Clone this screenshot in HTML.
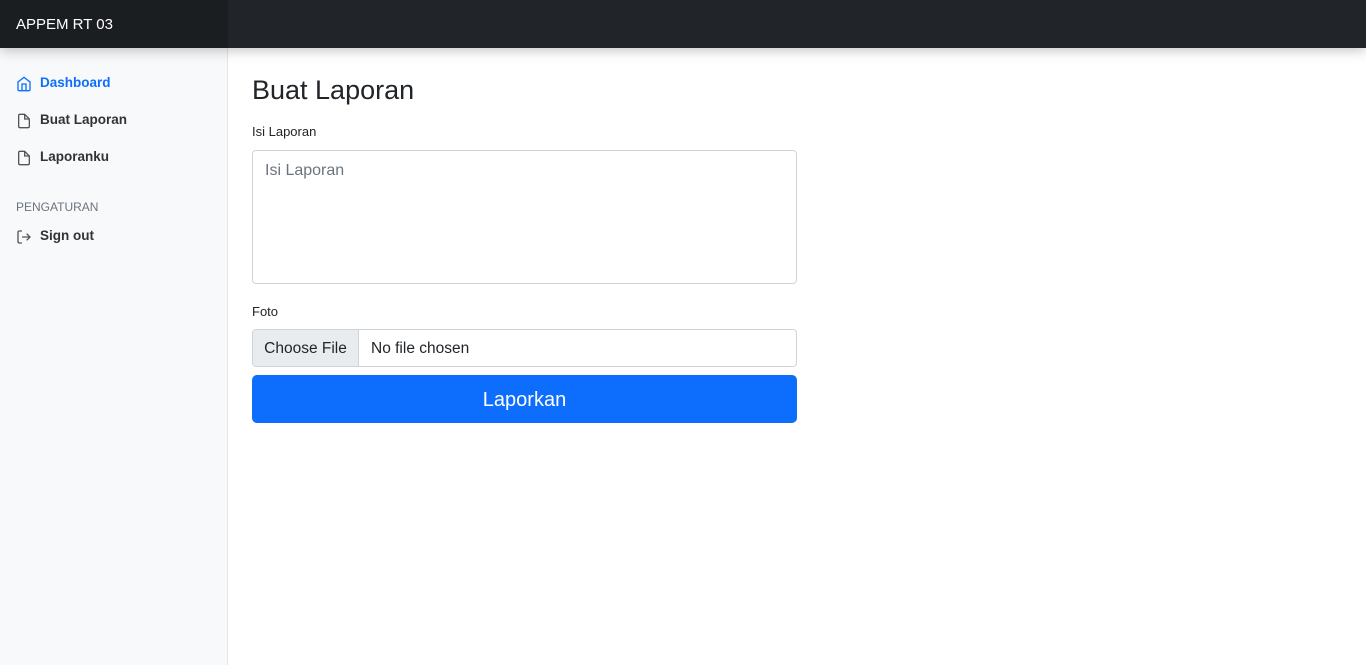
<!DOCTYPE html>
<html><head><style>
*{box-sizing:border-box;margin:0;padding:0}
body{width:1366px;height:665px;overflow:hidden;font-family:"Liberation Sans",sans-serif;color:#212529;background:#fff;position:relative}
.top{position:absolute;top:0;left:0;width:1366px;height:48px;background:#212529;box-shadow:0 2px 12px rgba(0,0,0,.25);z-index:2}
.brand{position:absolute;left:0;top:0;width:228px;height:48px;background:#1b1e21;color:#fff;font-size:15px;line-height:50px;padding-left:16px}
.side{position:absolute;top:48px;left:0;width:228px;height:617px;background:#f8f9fa;border-right:1px solid #e3e5e8}
.nav{position:absolute;left:16px;font-size:13.5px;font-weight:bold;color:#333}
.nav svg{position:absolute;left:0;top:1px}
.nav span{position:absolute;left:24px;white-space:nowrap}
.head{position:absolute;left:16px;font-size:12px;color:#6c757d}
h1{position:absolute;left:252px;top:75px;font-size:27px;font-weight:normal}
.lbl{position:absolute;left:252px;font-size:13px}
.ta{position:absolute;left:252px;top:150px;width:545px;height:134px;border:1px solid #ced4da;border-radius:4px;padding:11px 12px;color:#6c757d;font-size:16px}
.file{position:absolute;left:252px;top:329px;width:545px;height:38px;border:1px solid #ced4da;border-radius:4px;font-size:16px;overflow:hidden}
.file .b{position:absolute;left:0;top:0;width:106px;height:36px;background:#e9ecef;border-right:1px solid #ced4da;line-height:38px;text-align:center;font-size:15.5px}
.file .t{position:absolute;left:118px;line-height:38px;font-size:15.5px}
.btn{position:absolute;left:252px;top:375px;width:545px;height:48px;background:#0d6efd;border-radius:5px;color:#fff;font-size:20px;text-align:center;line-height:50px}
</style></head><body>
<div class="top"><div class="brand">APPEM RT 03</div></div>
<div class="side">
<div class="nav" style="top:27px;color:#0d6efd"><svg width="16" height="16" viewBox="0 0 24 24" fill="none" stroke="#0d6efd" stroke-width="2"><path d="M3 9l9-7 9 7v11a2 2 0 0 1-2 2H5a2 2 0 0 1-2-2z"/><path d="M9 22V12h6v10"/></svg><span>Dashboard</span></div>
<div class="nav" style="top:64px"><svg width="16" height="16" viewBox="0 0 24 24" fill="none" stroke="#555" stroke-width="2"><path d="M13 2H6a2 2 0 0 0-2 2v16a2 2 0 0 0 2 2h12a2 2 0 0 0 2-2V9z"/><path d="M13 2v7h7"/></svg><span>Buat Laporan</span></div>
<div class="nav" style="top:101px"><svg width="16" height="16" viewBox="0 0 24 24" fill="none" stroke="#555" stroke-width="2"><path d="M13 2H6a2 2 0 0 0-2 2v16a2 2 0 0 0 2 2h12a2 2 0 0 0 2-2V9z"/><path d="M13 2v7h7"/></svg><span>Laporanku</span></div>
<div class="head" style="top:152px">PENGATURAN</div>
<div class="nav" style="top:180px"><svg width="16" height="16" viewBox="0 0 24 24" fill="none" stroke="#555" stroke-width="2"><path d="M9 21H5a2 2 0 0 1-2-2V5a2 2 0 0 1 2-2h4"/><path d="M16 17l5-5-5-5M21 12H9"/></svg><span>Sign out</span></div>
</div>
<h1>Buat Laporan</h1>
<div class="lbl" style="top:124px">Isi Laporan</div>
<div class="ta">Isi Laporan</div>
<div class="lbl" style="top:304px">Foto</div>
<div class="file"><div class="b">Choose File</div><div class="t">No file chosen</div></div>
<div class="btn">Laporkan</div>
</body></html>
